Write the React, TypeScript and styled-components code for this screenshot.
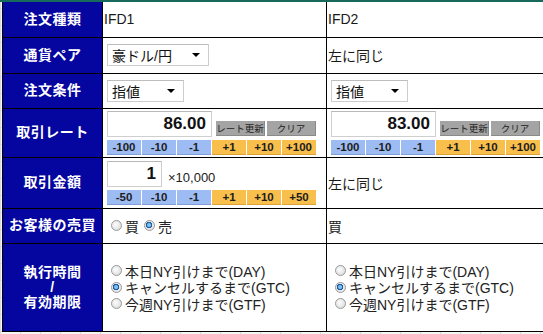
import React from "react";
import styled, { createGlobalStyle } from "styled-components";

const GlobalStyle = createGlobalStyle`
    html, body {
        margin: 0;
        padding: 0;
        overflow: hidden;
    }

    body {
        background-color: #f6f6f6;
        background-image: repeating-linear-gradient(90deg, #dadada 0 1px, transparent 1px 20px),
            repeating-linear-gradient(0deg, #dadada 0 1px, transparent 1px 17px);
        font-family: "Liberation Sans", "Noto Sans CJK JP", sans-serif;
    }
`;

const Frame = styled.div`
    border-top: 2px solid #17695c;
    padding-left: 2px;
    width: 541px;
    overflow: hidden;
`;

const Table = styled.table`
    border-collapse: collapse;
    table-layout: fixed;
    width: 574px;
    background: #fff;
    border-left: 1px solid #000;
`;

const Row = styled.tr<{ $h: number }>`
    height: ${(p) => p.$h}px;

    &:first-child > * {
        border-top: none;
    }
`;

const Label = styled.th`
    background: #0505a0;
    color: #fff;
    font-size: 14px;
    font-weight: bold;
    text-align: center;
    vertical-align: middle;
    line-height: 15px;
    border: 1px solid #000;
    padding: 0;
    letter-spacing: 0.5px;
`;

const Cell = styled.td`
    border: 1px solid #000;
    padding: 0 0 0 1px;
    vertical-align: middle;
    font-size: 14px;
    color: #1a1a1a;
`;

const Select = styled.div<{ $w: number }>`
    box-sizing: border-box;
    width: ${(p) => p.$w}px;
    height: 22px;
    margin-left: 3px;
    padding: 0 8px 0 4px;
    display: flex;
    align-items: center;
    justify-content: space-between;
    border: 1px solid #cdcdcd;
    border-top-color: #bdbdbd;
    background: #fff;
    font-size: 14px;
    color: #111;

    &::after {
        content: "";
        border-left: 4px solid transparent;
        border-right: 4px solid transparent;
        border-top: 4px solid #000;
    }
`;

const Entry = styled.div`
    display: flex;
    flex-direction: column;
    gap: 3px;
    margin-left: 3px;
`;

const EntryTop = styled.div`
    display: flex;
    align-items: flex-end;
`;

const ValueBox = styled.input<{ $w: number }>`
    box-sizing: border-box;
    width: ${(p) => p.$w}px;
    height: 26px;
    margin: 0;
    padding: 0 5px 0 0;
    border: 1px solid #cfcfcf;
    border-top-color: #b8b8b8;
    background: #fff;
    text-align: right;
    font-family: "Liberation Sans", sans-serif;
    font-size: 17px;
    font-weight: bold;
    color: #111;
    outline: none;
`;

const Unit = styled.span`
    margin-left: 6px;
    margin-bottom: 2px;
    font-size: 13px;
    color: #222;
`;

const ToolGroup = styled.div`
    display: flex;
    gap: 2px;
    margin-left: 4px;
    margin-bottom: 1px;
`;

const GrayButton = styled.div`
    width: 49px;
    height: 15px;
    background: #a4a4a4;
    border-right: 1px solid #8a8a8a;
    border-bottom: 1px solid #8a8a8a;
    box-sizing: border-box;
    color: #222;
    font-size: 9.5px;
    line-height: 15px;
    text-align: center;
    font-family: "Noto Sans CJK JP", sans-serif;
`;

const StepRow = styled.div`
    display: flex;
    gap: 1px;
`;

const StepButton = styled.div<{ $up: boolean }>`
    width: 34px;
    height: 15px;
    background: ${(p) => (p.$up ? "#f8bf4d" : "#9dbcf3")};
    border-bottom: 1px solid ${(p) => (p.$up ? "#d9a232" : "#7f9ed6")};
    box-sizing: border-box;
    color: #1c1c1c;
    font-size: 11.5px;
    font-weight: bold;
    line-height: 15px;
    text-align: center;
`;

const Radio = styled.span<{ $on?: boolean }>`
    display: inline-block;
    box-sizing: border-box;
    width: 11px;
    height: 11px;
    border-radius: 50%;
    border: 1px solid #9a9a9a;
    background: ${(p) =>
        p.$on
            ? "radial-gradient(circle at 45% 45%, #7fc0f0 0 1.5px, #1d5ea6 2.5px 3px, #e8e8e8 3.5px)"
            : "radial-gradient(circle at 40% 40%, #fdfdfd, #d4d4d4)"};
    margin-right: 3px;
    flex-shrink: 0;
`;

const Choice = styled.label`
    display: flex;
    align-items: center;
    height: 16px;
    font-size: 14px;
    color: #222;
`;

const ChoiceInline = styled.div`
    display: flex;
    gap: 5px;
    margin-left: 7px;
`;

const ChoiceList = styled.div`
    display: flex;
    flex-direction: column;
    gap: 0.5px;
    margin-left: 7px;
`;

const RATE_STEPS = [-100, -10, -1, 1, 10, 100];
const AMOUNT_STEPS = [-50, -10, -1, 1, 10, 50];

const Steps = ({ steps }: { steps: number[] }) => (
    <StepRow>
        {steps.map((s) => (
            <StepButton key={s} $up={s > 0}>
                {s > 0 ? `+${s}` : s}
            </StepButton>
        ))}
    </StepRow>
);

const RateEntry = ({ value }: { value: string }) => (
    <Entry>
        <EntryTop>
            <ValueBox $w={105} value={value} readOnly />
            <ToolGroup>
                <GrayButton>レート更新</GrayButton>
                <GrayButton>クリア</GrayButton>
            </ToolGroup>
        </EntryTop>
        <Steps steps={RATE_STEPS} />
    </Entry>
);

const TERMS = ["本日NY引けまで(DAY)", "キャンセルするまで(GTC)", "今週NY引けまで(GTF)"];

const TermChoices = () => (
    <ChoiceList>
        {TERMS.map((t, i) => (
            <Choice key={t}>
                <Radio $on={i === 1} />
                {t}
            </Choice>
        ))}
    </ChoiceList>
);

const App = () => {
    return (
        <>
            <GlobalStyle />
            <Frame>
                <Table>
                    <colgroup>
                        <col style={{ width: 100 }} />
                        <col style={{ width: 224 }} />
                        <col style={{ width: 250 }} />
                    </colgroup>
                    <tbody>
                        <Row $h={35}>
                            <Label>注文種類</Label>
                            <Cell>IFD1</Cell>
                            <Cell>IFD2</Cell>
                        </Row>
                        <Row $h={36}>
                            <Label>通貨ペア</Label>
                            <Cell>
                                <Select $w={102}>豪ドル/円</Select>
                            </Cell>
                            <Cell>左に同じ</Cell>
                        </Row>
                        <Row $h={35}>
                            <Label>注文条件</Label>
                            <Cell>
                                <Select $w={77}>指値</Select>
                            </Cell>
                            <Cell>
                                <Select $w={77}>指値</Select>
                            </Cell>
                        </Row>
                        <Row $h={49}>
                            <Label>取引レート</Label>
                            <Cell>
                                <RateEntry value="86.00" />
                            </Cell>
                            <Cell>
                                <RateEntry value="83.00" />
                            </Cell>
                        </Row>
                        <Row $h={51}>
                            <Label>取引金額</Label>
                            <Cell>
                                <Entry>
                                    <EntryTop>
                                        <ValueBox $w={55} value="1" readOnly />
                                        <Unit>×10,000</Unit>
                                    </EntryTop>
                                    <Steps steps={AMOUNT_STEPS} />
                                </Entry>
                            </Cell>
                            <Cell>左に同じ</Cell>
                        </Row>
                        <Row $h={35}>
                            <Label>お客様の売買</Label>
                            <Cell>
                                <ChoiceInline>
                                    <Choice>
                                        <Radio />買
                                    </Choice>
                                    <Choice>
                                        <Radio $on />売
                                    </Choice>
                                </ChoiceInline>
                            </Cell>
                            <Cell>買</Cell>
                        </Row>
                        <Row $h={88}>
                            <Label>
                                執行時間
                                <br />/<br />
                                有効期限
                            </Label>
                            <Cell>
                                <TermChoices />
                            </Cell>
                            <Cell>
                                <TermChoices />
                            </Cell>
                        </Row>
                    </tbody>
                </Table>
            </Frame>
        </>
    );
};

export default App;
